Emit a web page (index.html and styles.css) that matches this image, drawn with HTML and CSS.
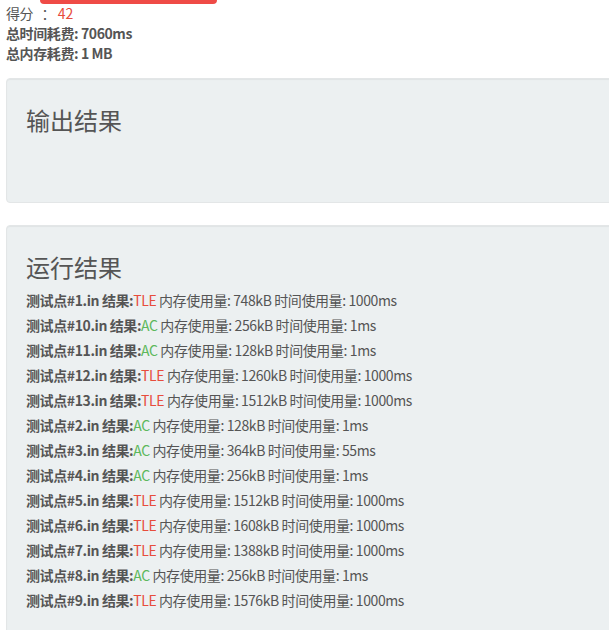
FILE: index.html
```html
<!DOCTYPE html>
<html>
<head>
<meta charset="utf-8">
<link rel="stylesheet" href="styles.css">
</head>
<body>
<div class="page">
  <div class="btn-stub"></div>
  <div class="summary">
    <div class="line">得分 &nbsp;&nbsp;： <span class="score">42</span></div>
    <div class="line"><b>总时间耗费: 7060ms</b></div>
    <div class="line"><b>总内存耗费: 1 MB</b></div>
  </div>
  <div class="well">
    <h3>输出结果</h3>
    <div class="output"></div>
  </div>
  <div class="well">
    <h3>运行结果</h3>
    <div class="row"><b>测试点#1.in 结果:</b><span class="tle">TLE</span> 内存使用量: 748kB 时间使用量: 1000ms</div>
    <div class="row"><b>测试点#10.in 结果:</b><span class="ac">AC</span> 内存使用量: 256kB 时间使用量: 1ms</div>
    <div class="row"><b>测试点#11.in 结果:</b><span class="ac">AC</span> 内存使用量: 128kB 时间使用量: 1ms</div>
    <div class="row"><b>测试点#12.in 结果:</b><span class="tle">TLE</span> 内存使用量: 1260kB 时间使用量: 1000ms</div>
    <div class="row"><b>测试点#13.in 结果:</b><span class="tle">TLE</span> 内存使用量: 1512kB 时间使用量: 1000ms</div>
    <div class="row"><b>测试点#2.in 结果:</b><span class="ac">AC</span> 内存使用量: 128kB 时间使用量: 1ms</div>
    <div class="row"><b>测试点#3.in 结果:</b><span class="ac">AC</span> 内存使用量: 364kB 时间使用量: 55ms</div>
    <div class="row"><b>测试点#4.in 结果:</b><span class="ac">AC</span> 内存使用量: 256kB 时间使用量: 1ms</div>
    <div class="row"><b>测试点#5.in 结果:</b><span class="tle">TLE</span> 内存使用量: 1512kB 时间使用量: 1000ms</div>
    <div class="row"><b>测试点#6.in 结果:</b><span class="tle">TLE</span> 内存使用量: 1608kB 时间使用量: 1000ms</div>
    <div class="row"><b>测试点#7.in 结果:</b><span class="tle">TLE</span> 内存使用量: 1388kB 时间使用量: 1000ms</div>
    <div class="row"><b>测试点#8.in 结果:</b><span class="ac">AC</span> 内存使用量: 256kB 时间使用量: 1ms</div>
    <div class="row"><b>测试点#9.in 结果:</b><span class="tle">TLE</span> 内存使用量: 1576kB 时间使用量: 1000ms</div>
    <div class="output"></div>
  </div>
</div>
</body>
</html>
```
FILE: styles.css
```css
html, body {
  margin: 0;
  padding: 0;
  background: #ffffff;
  overflow: hidden;
}
body {
  font-family: "Noto Sans CJK SC", sans-serif;
  font-size: 14px;
  line-height: 20px;
  letter-spacing: -0.4px;
  color: #555555;
}
.page {
  width: 640px;
  padding-left: 6px;
}
.btn-stub {
  margin-left: 34px;
  width: 177px;
  height: 4px;
  background: #ef4b46;
  border-radius: 0 0 4px 4px;
  margin-bottom: -1px;
}
.summary .line {
  height: 20px;
}
.summary b {
  font-weight: 700;
}
.score {
  color: #e74c3c;
  letter-spacing: 0;
}
.well {
  margin-top: 15px;
  margin-bottom: 22px;
  padding: 19px;
  background: #ecf0f1;
  border: 1px solid #e3e6e7;
  border-radius: 4px;
  box-shadow: inset 0 1px 1px rgba(0, 0, 0, 0.05);
}
.well + .well {
  margin-top: 0;
}
.well h3 {
  margin: 9px 0 10px;
  font-size: 24px;
  line-height: 26px;
  font-weight: 400;
  letter-spacing: 0;
  color: #555555;
}
.output {
  height: 40px;
}
.row {
  margin-bottom: 5px;
}
.row b {
  font-weight: 700;
}
.tle {
  color: #e74c3c;
}
.ac {
  color: #5cb85c;
}
```
